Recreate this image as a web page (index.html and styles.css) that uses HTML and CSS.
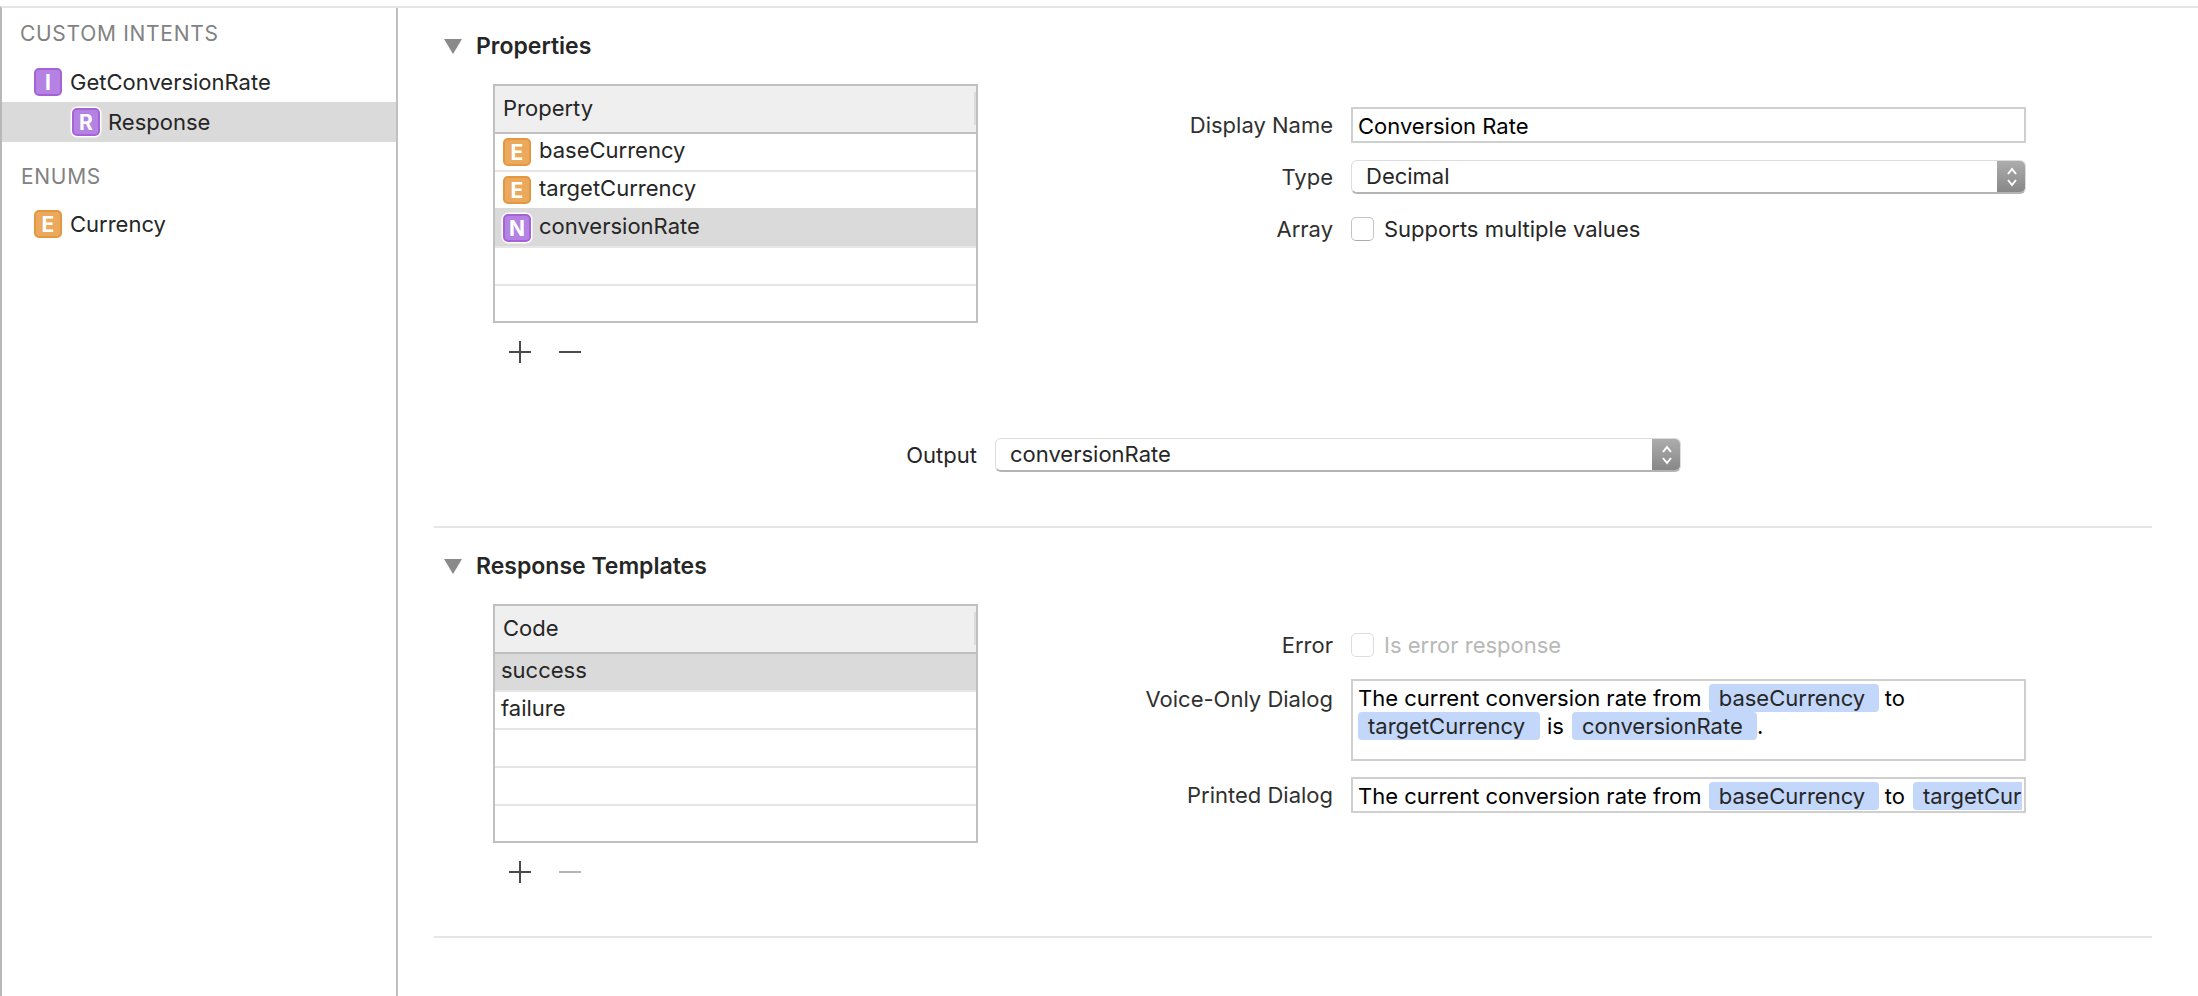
FILE: index.html
```html
<!DOCTYPE html>
<html lang="en">
<head>
    <meta charset="UTF-8">
    <title>Intents</title>
    <link rel="stylesheet" href="styles.css">
</head>
<body>
    <div class="window">
        <!-- Lista de la izquierda -->
        <aside class="sidebar">
            <h2 class="side-title">CUSTOM INTENTS</h2>
            <div class="side-row"><span class="badge badge-purple">I</span>GetConversionRate</div>
            <div class="side-row side-row-child side-row-selected"><span class="badge badge-purple badge-ring">R</span>Response</div>
            <h2 class="side-title side-title-enums">ENUMS</h2>
            <div class="side-row"><span class="badge badge-orange">E</span>Currency</div>
        </aside>

        <main class="main">
            <section class="section section-properties">
                <h3 class="section-head"><span class="triangle"></span>Properties</h3>
                <div class="section-body">
                    <div class="table-wrap">
                        <div class="table">
                            <div class="table-header">Property<span class="header-grip"></span></div>
                            <div class="table-rows">
                                <div class="row"><span class="badge badge-orange">E</span>baseCurrency</div>
                                <div class="row"><span class="badge badge-orange">E</span>targetCurrency</div>
                                <div class="row row-selected"><span class="badge badge-purple badge-ring">N</span>conversionRate</div>
                                <div class="row"></div>
                                <div class="row row-last"></div>
                            </div>
                        </div>
                        <div class="table-tools">
                            <svg class="tool" width="22" height="22" viewBox="0 0 22 22"><path d="M0 11H22M11 0V22" stroke="#4a4a4a" stroke-width="2"/></svg>
                            <svg class="tool" width="22" height="22" viewBox="0 0 22 22"><path d="M0 11H22" stroke="#4a4a4a" stroke-width="2"/></svg>
                        </div>
                    </div>
                    <div class="fields fields-properties">
                        <label class="field-label">Display Name</label>
                        <div class="text-box">Conversion Rate</div>
                        <label class="field-label">Type</label>
                        <div class="select"><span class="select-value">Decimal</span><span class="stepper"><svg width="12" height="24" viewBox="0 0 12 24"><path d="M2 9L6 4L10 9M2 15L6 20L10 15" fill="none" stroke="#fff" stroke-width="2"/></svg></span></div>
                        <label class="field-label field-label-check">Array</label>
                        <div class="check-line field-check"><span class="checkbox"></span>Supports multiple values</div>
                    </div>
                </div>
                <div class="output-row">
                    <label class="output-label">Output</label>
                    <div class="select select-output"><span class="select-value">conversionRate</span><span class="stepper"><svg width="12" height="24" viewBox="0 0 12 24"><path d="M2 9L6 4L10 9M2 15L6 20L10 15" fill="none" stroke="#fff" stroke-width="2"/></svg></span></div>
                </div>
            </section>

            <section class="section section-templates">
                <h3 class="section-head"><span class="triangle"></span>Response Templates</h3>
                <div class="section-body">
                    <div class="table-wrap">
                        <div class="table">
                            <div class="table-header">Code<span class="header-grip"></span></div>
                            <div class="table-rows">
                                <div class="row row-plain row-selected">success</div>
                                <div class="row row-plain">failure</div>
                                <div class="row"></div>
                                <div class="row"></div>
                                <div class="row row-last"></div>
                            </div>
                        </div>
                        <div class="table-tools">
                            <svg class="tool" width="22" height="22" viewBox="0 0 22 22"><path d="M0 11H22M11 0V22" stroke="#4a4a4a" stroke-width="2"/></svg>
                            <svg class="tool" width="22" height="22" viewBox="0 0 22 22"><path d="M0 11H22" stroke="#b4b4b4" stroke-width="2"/></svg>
                        </div>
                    </div>
                    <div class="fields fields-templates">
                        <label class="field-label">Error</label>
                        <div class="check-line check-disabled"><span class="checkbox"></span>Is error response</div>
                        <label class="field-label field-label-top">Voice-Only Dialog</label>
                        <div class="dialog-box dialog-multi">
                            <div class="dialog-line">The current conversion rate from <span class="token token-first">baseCurrency</span><span class="gap-to">to</span></div>
                            <div class="dialog-line"><span class="token token-target">targetCurrency</span><span class="gap-is">is</span><span class="token token-rate">conversionRate</span>.</div>
                        </div>
                        <label class="field-label field-label-printed">Printed Dialog</label>
                        <div class="dialog-box dialog-single">
                            <div class="dialog-line">The current conversion rate from <span class="token token-first">baseCurrency</span><span class="gap-to">to</span><span class="token token-clipped">targetCur</span></div>
                        </div>
                    </div>
                </div>
            </section>
        </main>
    </div>
</body>
</html>
```

FILE: styles.css
```css
* {
    box-sizing: border-box;
}
html, body {
    margin: 0;
    height: 100%;
}
body {
    font-family: Inter, "Liberation Sans", sans-serif;
    font-size: 22px;
    color: #262626;
    background-color: white;
    overflow: hidden;
}
.window {
    display: flex;
    height: 996px;
    margin-top: 6px;
    border-top: 2px solid #e6e6e6;
    border-left: 2px solid #b8b8b8;
}

/* Sidebar */
.sidebar {
    width: 396px;
    flex: none;
    border-right: 2px solid #c0c0c0;
    padding-top: 14px;
}
.side-title {
    margin: 0 0 0 18px;
    height: 24px;
    line-height: 24px;
    font-size: 21px;
    letter-spacing: 0.7px;
    font-weight: 400;
    color: #828282;
}
.side-title-enums {
    margin-top: 23px;
    margin-left: 19px;
}
.side-row {
    display: flex;
    align-items: center;
    height: 40px;
    padding-left: 32px;
}
.side-title + .side-row {
    margin-top: 16px;
}
.side-title-enums + .side-row {
    margin-top: 15px;
}
.side-row-child {
    padding-left: 70px;
}
.side-row-selected {
    background-color: #dadada;
}
.badge {
    display: inline-flex;
    flex: none;
    align-items: center;
    justify-content: center;
    width: 28px;
    height: 28px;
    margin-right: 8px;
    border-radius: 5px;
    border: 2px solid;
    color: white;
    font-size: 21px;
    font-weight: 700;
}
.badge-purple {
    background-color: #b482e2;
    border-color: #a663d8;
}
.badge-orange {
    background-color: #eaa95c;
    border-color: #e5973f;
}
.badge-ring {
    box-shadow: 0 0 0 1.5px white;
}

/* Main panel */
.main {
    flex: 1;
    min-width: 0;
    padding-left: 36px;
    padding-right: 46px;
}
.section {
    border-bottom: 2px solid #e6e6e6;
}
.section-properties {
    height: 520px;
    padding-top: 26px;
}
.section-templates {
    height: 410px;
    padding-top: 26px;
}
.section-head {
    display: flex;
    align-items: center;
    height: 24px;
    margin: 0 0 0 10px;
    font-size: 23px;
    font-weight: 600;
}
.triangle {
    width: 0;
    height: 0;
    margin-right: 14px;
    border-left: 9px solid transparent;
    border-right: 9px solid transparent;
    border-top: 15px solid #8a8a8a;
}
.section-body {
    display: flex;
    align-items: flex-start;
    margin-top: 26px;
    margin-left: 59px;
}

/* Tables */
.table-wrap {
    width: 485px;
    flex: none;
}
.table {
    height: 239px;
    border: 2px solid #c0c0c0;
}
.table-header {
    display: flex;
    align-items: center;
    justify-content: space-between;
    height: 48px;
    padding-left: 8px;
    padding-bottom: 2px;
    background-color: #efefef;
    border-bottom: 2px solid #c0c0c0;
}
.header-grip {
    width: 2px;
    height: 33px;
    background-color: #dcdcdc;
}
.row {
    display: flex;
    align-items: center;
    height: 38px;
    padding-left: 8px;
    padding-bottom: 4px;
    border-bottom: 2px solid #e6e6e6;
}
.row .badge {
    margin-top: 4px;
}
.row-plain {
    padding-left: 6px;
}
.row-last {
    height: 35px;
    border-bottom: none;
}
.row-selected {
    background-color: #dadada;
}
.row-selected:not(:first-child) {
    box-shadow: 0 -2px 0 #dadada;
}
.table-tools {
    display: flex;
    gap: 28px;
    margin-top: 18px;
    padding-left: 16px;
}

/* Fields */
.fields {
    display: grid;
    grid-template-columns: 355px 675px;
    column-gap: 18px;
    align-items: center;
}
.fields-properties {
    margin-top: 23px;
    row-gap: 17px;
}
.fields-templates {
    margin-top: 29px;
    row-gap: 22px;
}
.field-label {
    line-height: 24px;
    text-align: right;
    color: #303030;
}
.field-label-check {
    margin-top: 6px;
}
.field-check {
    margin-top: 6px;
}
.field-label-top {
    align-self: start;
    margin-top: 8px;
}
.field-label-printed {
    margin-top: -6px;
}
.text-box {
    height: 36px;
    line-height: 34px;
    padding-left: 5px;
    color: black;
    border: 2px solid #cfcfcf;
}
.select {
    display: flex;
    justify-content: space-between;
    height: 34px;
    border-radius: 6px;
    border: 1px solid #dcdcdc;
    border-bottom: 2px solid #b4b4b4;
    overflow: hidden;
}
.select-value {
    line-height: 31px;
    padding-left: 14px;
}
.stepper {
    display: flex;
    align-items: center;
    justify-content: center;
    width: 29px;
    margin: -1px -1px -2px 0;
    background: linear-gradient(#aeaeae, #858585);
}
.check-line {
    display: flex;
    align-items: center;
    height: 24px;
}
.checkbox {
    width: 23px;
    height: 24px;
    margin-right: 10px;
    background-color: white;
    border: 1px solid #c4c4c4;
    border-bottom-color: #acacac;
    border-radius: 5px;
}
.check-disabled {
    color: #b8b8b8;
}
.check-disabled .checkbox {
    border-color: #dddddd;
}

/* Dialog boxes and tokens */
.dialog-box {
    padding: 3px 1px 0 5px;
    color: black;
    border: 2px solid #cfcfcf;
    overflow: hidden;
}
.dialog-multi {
    height: 82px;
}
.dialog-single {
    height: 36px;
    margin-top: -6px;
}
.dialog-line {
    display: flex;
    align-items: center;
    height: 28px;
    white-space: pre;
    overflow: hidden;
}
.token {
    display: inline-block;
    flex: none;
    height: 28px;
    line-height: 28px;
    padding-left: 10px;
    background-color: #c3d7fb;
    border-radius: 4px;
    color: #262626;
}
.token-first {
    width: 170px;
    margin-left: 1px;
}
.token-target {
    width: 182px;
}
.token-rate {
    width: 185px;
}
.token-clipped {
    width: 109px;
    border-radius: 4px 0 0 4px;
}
.gap-to {
    margin: 0 8px 0 6px;
}
.gap-is {
    margin: 0 8px 0 7px;
}

.output-row {
    display: flex;
    align-items: center;
    margin-top: 75px;
    margin-left: 472px;
}
.output-label {
    width: 71px;
    margin-right: 18px;
    text-align: right;
}
.select-output {
    width: 686px;
}
```
